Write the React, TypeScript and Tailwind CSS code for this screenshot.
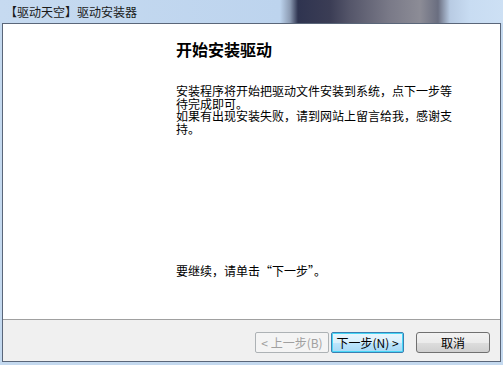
import React from "react";

export default function App() {
  const font = { fontFamily: '"Noto Sans CJK SC", "Noto Sans", sans-serif' };
  return (
    <div
      className="w-[503px] h-[365px] flex flex-col bg-[#c4d9ef] overflow-hidden"
      style={font}
    >
      <div className="h-[23px] flex items-center pl-[5px] text-[12px] leading-none text-[#1a1a1a] bg-[linear-gradient(to_right,#c6daf0_0px,#bdd4ee_280px,#8c9bb3_290px,#2f3450_298px,#3b3d55_330px,#55566a_350px,#7a7a88_390px,#8c8c96_420px,#6a6e80_438px,#b8cbe3_450px,#c8dcf2_470px,#cde0f4_503px)]">
        【驱动天空】驱动安装器
      </div>
      <div className="flex-1 mx-[2px] mb-[3px] border border-[#5a6679] flex flex-col bg-white">
        <div className="flex-1 flex flex-col pl-[173px] pt-[13px]">
          <div className="text-[16px] font-bold leading-[24px] text-black">开始安装驱动</div>
          <div className="mt-[24px] w-[280px] text-[12px] leading-[12.5px] text-black">
            <p>安装程序将开始把驱动文件安装到系统，点下一步等待完成即可。</p>
            <p>如果有出现安装失败，请到网站上留言给我，感谢支持。</p>
          </div>
          <div className="mt-[130px] text-[12px] leading-[12px] text-black">要继续，请单击“下一步”。</div>
        </div>
        <div className="h-[42px] border-t border-[#a0a0a0] bg-[#f0f0f0] flex items-start justify-end pt-[12px] pr-[10px]">
          <div className="w-[74px] h-[21px] border border-[#adb2b5] rounded-[2px] bg-[#f4f4f4] text-[#a0a0a0] text-[12px] flex items-center justify-center leading-none">
            &lt; 上一步(B)
          </div>
          <div className="ml-[2px] w-[73px] h-[21px] border border-[#3c7fb1] rounded-[2px] bg-[linear-gradient(to_bottom,#eaf6fd_0%,#d9f0fc_50%,#bee6fd_51%,#a7d9f5_100%)] shadow-[inset_0_0_0_1px_#48d7f7] text-black text-[12px] flex items-center justify-center leading-none">
            下一步(N) &gt;
          </div>
          <div className="ml-[12px] w-[74px] h-[21px] border border-[#707070] rounded-[3px] bg-[linear-gradient(to_bottom,#f2f2f2_0%,#ebebeb_50%,#dddddd_51%,#cfcfcf_100%)] text-black text-[12px] flex items-center justify-center leading-none">
            取消
          </div>
        </div>
      </div>
    </div>
  );
}
